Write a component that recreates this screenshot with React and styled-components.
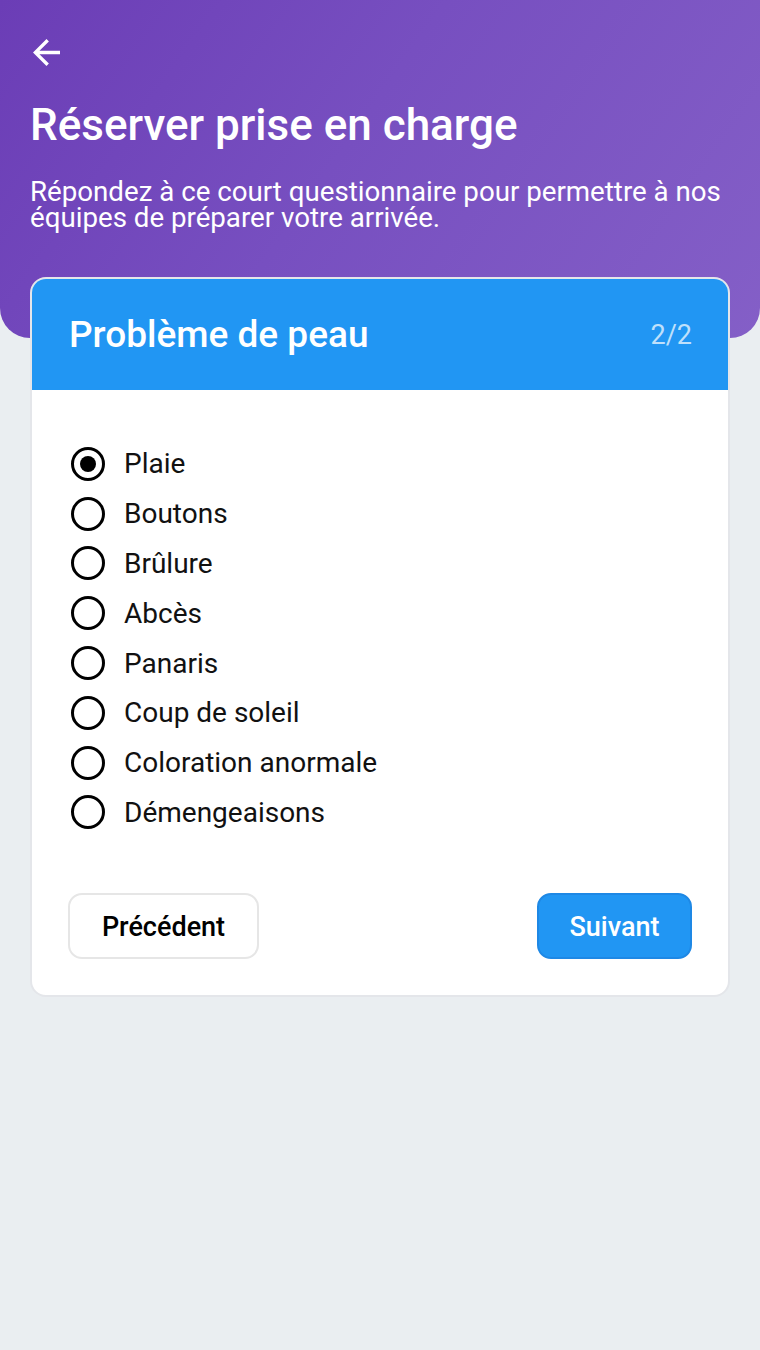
import React, { useState } from "react";
import styled, { createGlobalStyle } from "styled-components";

const GlobalStyle = createGlobalStyle`
  html, body {
    margin: 0;
    padding: 0;
    background: #eaeef1;
    font-family: Roboto, "Noto Sans", sans-serif;
  }
`;

const options = [
  "Plaie",
  "Boutons",
  "Brûlure",
  "Abcès",
  "Panaris",
  "Coup de soleil",
  "Coloration anormale",
  "Démengeaisons",
];

export default function App() {
  const [selected, setSelected] = useState(0);

  return (
    <Page>
      <GlobalStyle />
      <Hero>
        <BackButton aria-label="Retour">
          <svg width="27" height="27" viewBox="4 4 16 16" fill="#fff">
            <path d="M20 11H7.83l5.59-5.59L12 4l-8 8 8 8 1.41-1.41L7.83 13H20v-2z" />
          </svg>
        </BackButton>
        <Title>Réserver prise en charge</Title>
        <Subtitle>
          Répondez à ce court questionnaire pour permettre à nos équipes de préparer votre arrivée.
        </Subtitle>
      </Hero>
      <Card>
        <CardHeader>
          <CardTitle>Problème de peau</CardTitle>
          <Step>2/2</Step>
        </CardHeader>
        <CardBody>
          <OptionList>
            {options.map((label, index) => (
              <Option key={label} onClick={() => setSelected(index)}>
                <Radio $checked={selected === index} />
                <OptionLabel>{label}</OptionLabel>
              </Option>
            ))}
          </OptionList>
          <Actions>
            <SecondaryButton>Précédent</SecondaryButton>
            <PrimaryButton>Suivant</PrimaryButton>
          </Actions>
        </CardBody>
      </Card>
    </Page>
  );
}

const Page = styled.div`
  min-height: 1350px;
  background: #eaeef1;
`;

const Hero = styled.header`
  background: linear-gradient(125deg, #6b3db6 0%, #774fc0 45%, #845fc7 100%);
  border-radius: 0 0 30px 30px;
  padding: 39px 30px 0;
  height: 299px;
  color: #fff;
`;

const BackButton = styled.button`
  display: flex;
  align-items: center;
  justify-content: center;
  width: 27px;
  height: 27px;
  padding: 0;
  margin-left: 3px;
  border: none;
  background: none;
  cursor: pointer;
`;

const Title = styled.h1`
  margin: 34px 0 0;
  font-size: 44px;
  line-height: 50px;
  font-weight: 500;
  letter-spacing: 0;
`;

const Subtitle = styled.p`
  margin: 29px 0 0;
  font-size: 27.7px;
  line-height: 26px;
  font-weight: 400;
  color: #fff;
`;

const Card = styled.section`
  margin: -61px 30px 0;
  background: #fff;
  border: 2px solid #e4e6ea;
  border-radius: 16px;
  overflow: hidden;
`;

const CardHeader = styled.div`
  display: flex;
  align-items: center;
  justify-content: space-between;
  height: 111px;
  padding: 0 36px 0 37px;
  background: #2196f3;
`;

const CardTitle = styled.h2`
  margin: 0;
  font-size: 37px;
  font-weight: 500;
  color: #fff;
`;

const Step = styled.span`
  font-size: 27px;
  color: #bfe0fb;
`;

const CardBody = styled.div`
  padding: 49px 36px 36px;
`;

const OptionList = styled.div`
  display: flex;
  flex-direction: column;
`;

const Option = styled.label`
  display: flex;
  align-items: center;
  gap: 19px;
  height: 49.8px;
  cursor: pointer;
`;

const Radio = styled.span`
  position: relative;
  box-sizing: border-box;
  width: 34px;
  height: 34px;
  margin-left: 3px;
  border: 3px solid #000;
  border-radius: 50%;

  &::after {
    content: "";
    display: ${(p) => (p.$checked ? "block" : "none")};
    position: absolute;
    top: 6px;
    left: 6px;
    width: 16px;
    height: 16px;
    border-radius: 50%;
    background: #000;
  }
`;

const OptionLabel = styled.span`
  font-size: 28px;
  color: #111;
`;

const Actions = styled.div`
  display: flex;
  align-items: center;
  justify-content: space-between;
  margin-top: 56px;
`;

const BaseButton = styled.button`
  box-sizing: border-box;
  height: 66px;
  padding-top: 3px;
  border-radius: 14px;
  font-family: Roboto, "Noto Sans", sans-serif;
  font-size: 27px;
  font-weight: 500;
  cursor: pointer;
`;

const SecondaryButton = styled(BaseButton)`
  width: 191px;
  background: #fff;
  border: 2px solid #e6e6e6;
  color: #000;
`;

const PrimaryButton = styled(BaseButton)`
  width: 155px;
  background: #2196f3;
  border: 2px solid #1e88e5;
  color: #fff;
`;
